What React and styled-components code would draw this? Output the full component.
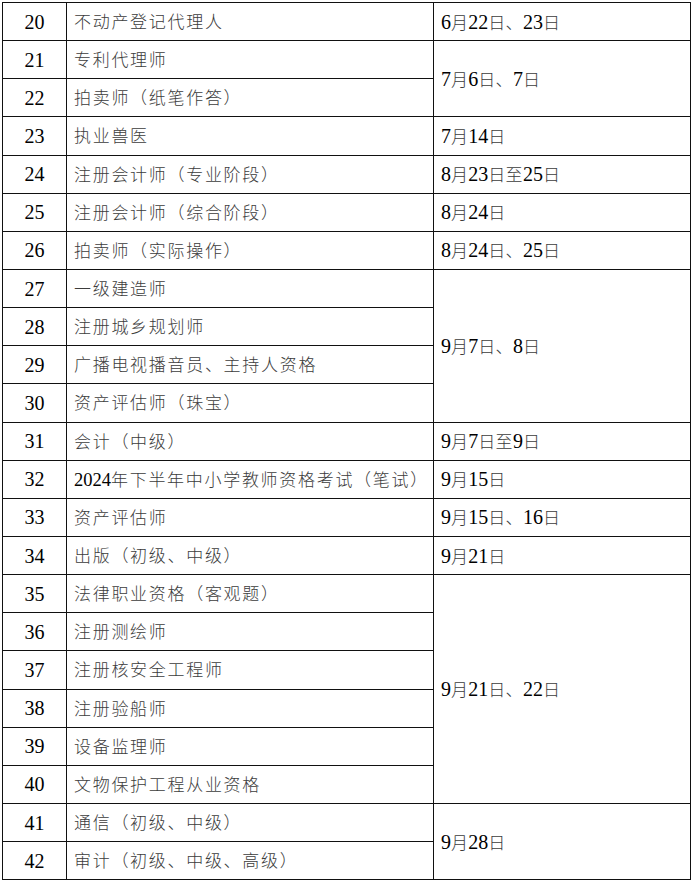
import React from "react";
import styled, { createGlobalStyle } from "styled-components";

const GlobalStyle = createGlobalStyle`
  body {
    margin: 0;
    background: #fff;
  }
`;

const Page = styled.div`
  padding: 2px 0 0 2px;
`;

const Table = styled.table`
  width: 688px;
  border-collapse: collapse;
  table-layout: fixed;
  border: 1.5px solid #111;
  font-family: "Liberation Serif", "Noto Sans CJK SC", serif;
`;

const Row = styled.tr`
  height: 38.15px;
`;

const Cell = styled.td`
  border: 1px solid #111;
  padding: 0 0 0 ${(p) => (p.$center ? 0 : 7)}px;
  text-align: ${(p) => (p.$center ? "center" : "left")};
  vertical-align: middle;
  white-space: nowrap;
  line-height: 1;
`;

const Num = styled.span`
  font-family: "Liberation Serif", serif;
  font-size: ${(p) => p.$size || 20}px;
  color: #000;
`;

const Han = styled.span`
  font-family: "Noto Sans CJK SC", sans-serif;
  font-size: 17px;
  font-weight: 300;
  color: #3c3c3c;
  letter-spacing: ${(p) => p.$spacing || 0}px;
`;

const rows = [
  { n: 20, name: "不动产登记代理人", date: "6月22日、23日" },
  { n: 21, name: "专利代理师", date: "7月6日、7日", span: 2 },
  { n: 22, name: "拍卖师（纸笔作答）" },
  { n: 23, name: "执业兽医", date: "7月14日" },
  { n: 24, name: "注册会计师（专业阶段）", date: "8月23日至25日" },
  { n: 25, name: "注册会计师（综合阶段）", date: "8月24日" },
  { n: 26, name: "拍卖师（实际操作）", date: "8月24日、25日" },
  { n: 27, name: "一级建造师", date: "9月7日、8日", span: 4 },
  { n: 28, name: "注册城乡规划师" },
  { n: 29, name: "广播电视播音员、主持人资格" },
  { n: 30, name: "资产评估师（珠宝）" },
  { n: 31, name: "会计（中级）", date: "9月7日至9日" },
  { n: 32, name: "2024年下半年中小学教师资格考试（笔试）", date: "9月15日" },
  { n: 33, name: "资产评估师", date: "9月15日、16日" },
  { n: 34, name: "出版（初级、中级）", date: "9月21日" },
  { n: 35, name: "法律职业资格（客观题）", date: "9月21日、22日", span: 6 },
  { n: 36, name: "注册测绘师" },
  { n: 37, name: "注册核安全工程师" },
  { n: 38, name: "注册验船师" },
  { n: 39, name: "设备监理师" },
  { n: 40, name: "文物保护工程从业资格" },
  { n: 41, name: "通信（初级、中级）", date: "9月28日", span: 2 },
  { n: 42, name: "审计（初级、中级、高级）" },
];

// split a string into digit runs (serif) and han runs (cjk)
const Mixed = ({ text, numSize, spacing }) =>
  text.split(/(\d+)/).filter(Boolean).map((part, i) =>
    /^\d+$/.test(part) ? (
      <Num key={i} $size={numSize}>{part}</Num>
    ) : (
      <Han key={i} $spacing={spacing}>{part}</Han>
    )
  );

export default function App() {
  return (
    <Page>
      <GlobalStyle />
      <Table>
        <colgroup>
          <col style={{ width: 64 }} />
          <col style={{ width: 367 }} />
          <col style={{ width: 257 }} />
        </colgroup>
        <tbody>
          {rows.map((r) => (
            <Row key={r.n}>
              <Cell $center>
                <Num>{r.n}</Num>
              </Cell>
              <Cell>
                <Mixed text={r.name} numSize={18.5} spacing={1.7} />
              </Cell>
              {r.date && (
                <Cell rowSpan={r.span || 1}>
                  <Mixed text={r.date} spacing={0.3} />
                </Cell>
              )}
            </Row>
          ))}
        </tbody>
      </Table>
    </Page>
  );
}
